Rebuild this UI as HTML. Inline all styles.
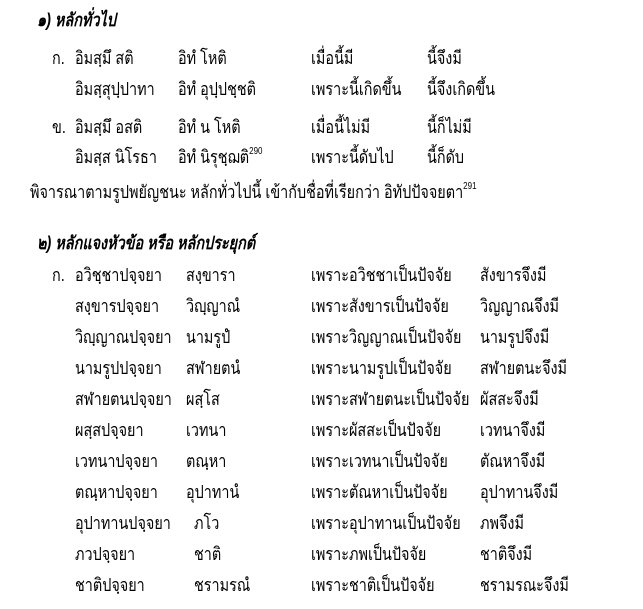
<!DOCTYPE html>
<html><head><meta charset="utf-8"><style>
body{margin:0;width:643px;height:609px;background:#fff;position:relative;overflow:hidden;font-family:"Liberation Sans","DejaVu Sans",sans-serif;color:#000;font-size:18px}
.t{position:absolute;line-height:20px;white-space:nowrap;transform:scaleX(0.8);transform-origin:0 0;margin-top:5px}
.h{font-weight:bold;font-style:italic;margin-top:3px}
sup{font-size:10px;vertical-align:top;line-height:10px}
</style></head><body>
<div class="t h" style="left:37px;top:7px">๑) หลักทั่วไป</div>
<div class="t" style="left:52px;top:43px">ก.</div>
<div class="t" style="left:75px;top:43px">อิมสฺมึ สติ</div>
<div class="t" style="left:178px;top:43px">อิทํ โหติ</div>
<div class="t" style="left:311px;top:43px">เมื่อนี้มี</div>
<div class="t" style="left:427px;top:43px">นี้จึงมี</div>
<div class="t" style="left:75px;top:74px">อิมสฺสุปฺปาทา</div>
<div class="t" style="left:178px;top:74px">อิทํ อุปฺปชฺชติ</div>
<div class="t" style="left:311px;top:74px">เพราะนี้เกิดขึ้น</div>
<div class="t" style="left:427px;top:74px">นี้จึงเกิดขึ้น</div>
<div class="t" style="left:52px;top:112px">ข.</div>
<div class="t" style="left:75px;top:112px">อิมสฺมึ อสติ</div>
<div class="t" style="left:178px;top:112px">อิทํ น โหติ</div>
<div class="t" style="left:311px;top:112px">เมื่อนี้ไม่มี</div>
<div class="t" style="left:427px;top:112px">นี้ก็ไม่มี</div>
<div class="t" style="left:75px;top:142px">อิมสฺส นิโรธา</div>
<div class="t" style="left:178px;top:142px">อิทํ นิรุชฺฌติ<sup>290</sup></div>
<div class="t" style="left:311px;top:142px">เพราะนี้ดับไป</div>
<div class="t" style="left:427px;top:142px">นี้ก็ดับ</div>
<div class="t" style="left:30px;top:177px">พิจารณาตามรูปพยัญชนะ หลักทั่วไปนี้ เข้ากับชื่อที่เรียกว่า อิทัปปัจจยตา<sup>291</sup></div>
<div class="t h" style="left:37px;top:230px">๒) หลักแจงหัวข้อ หรือ หลักประยุกต์</div>
<div class="t" style="left:52px;top:260px">ก.</div>
<div class="t" style="left:75px;top:260px">อวิชฺชาปจฺจยา</div><div class="t" style="left:186px;top:260px">สงฺขารา</div><div class="t" style="left:311px;top:260px">เพราะอวิชชาเป็นปัจจัย</div><div class="t" style="left:480px;top:260px">สังขารจึงมี</div>
<div class="t" style="left:75px;top:291px">สงฺขารปจฺจยา</div><div class="t" style="left:186px;top:291px">วิญฺญาณํ</div><div class="t" style="left:311px;top:291px">เพราะสังขารเป็นปัจจัย</div><div class="t" style="left:480px;top:291px">วิญญาณจึงมี</div>
<div class="t" style="left:75px;top:322px">วิญฺญาณปจฺจยา</div><div class="t" style="left:186px;top:322px">นามรูปํ</div><div class="t" style="left:311px;top:322px">เพราะวิญญาณเป็นปัจจัย</div><div class="t" style="left:480px;top:322px">นามรูปจึงมี</div>
<div class="t" style="left:75px;top:353px">นามรูปปจฺจยา</div><div class="t" style="left:186px;top:353px">สฬายตนํ</div><div class="t" style="left:311px;top:353px">เพราะนามรูปเป็นปัจจัย</div><div class="t" style="left:480px;top:353px">สฬายตนะจึงมี</div>
<div class="t" style="left:75px;top:384px">สฬายตนปจฺจยา</div><div class="t" style="left:186px;top:384px">ผสฺโส</div><div class="t" style="left:311px;top:384px">เพราะสฬายตนะเป็นปัจจัย</div><div class="t" style="left:480px;top:384px">ผัสสะจึงมี</div>
<div class="t" style="left:75px;top:415px">ผสฺสปจฺจยา</div><div class="t" style="left:186px;top:415px">เวทนา</div><div class="t" style="left:311px;top:415px">เพราะผัสสะเป็นปัจจัย</div><div class="t" style="left:480px;top:415px">เวทนาจึงมี</div>
<div class="t" style="left:75px;top:446px">เวทนาปจฺจยา</div><div class="t" style="left:186px;top:446px">ตณฺหา</div><div class="t" style="left:311px;top:446px">เพราะเวทนาเป็นปัจจัย</div><div class="t" style="left:480px;top:446px">ตัณหาจึงมี</div>
<div class="t" style="left:75px;top:477px">ตณฺหาปจฺจยา</div><div class="t" style="left:186px;top:477px">อุปาทานํ</div><div class="t" style="left:311px;top:477px">เพราะตัณหาเป็นปัจจัย</div><div class="t" style="left:480px;top:477px">อุปาทานจึงมี</div>
<div class="t" style="left:75px;top:508px">อุปาทานปจฺจยา</div><div class="t" style="left:194px;top:508px">ภโว</div><div class="t" style="left:311px;top:508px">เพราะอุปาทานเป็นปัจจัย</div><div class="t" style="left:480px;top:508px">ภพจึงมี</div>
<div class="t" style="left:75px;top:539px">ภวปจฺจยา</div><div class="t" style="left:194px;top:539px">ชาติ</div><div class="t" style="left:311px;top:539px">เพราะภพเป็นปัจจัย</div><div class="t" style="left:480px;top:539px">ชาติจึงมี</div>
<div class="t" style="left:75px;top:570px">ชาติปจฺจยา</div><div class="t" style="left:194px;top:570px">ชรามรณํ</div><div class="t" style="left:311px;top:570px">เพราะชาติเป็นปัจจัย</div><div class="t" style="left:480px;top:570px">ชรามรณะจึงมี</div>
</body></html>
